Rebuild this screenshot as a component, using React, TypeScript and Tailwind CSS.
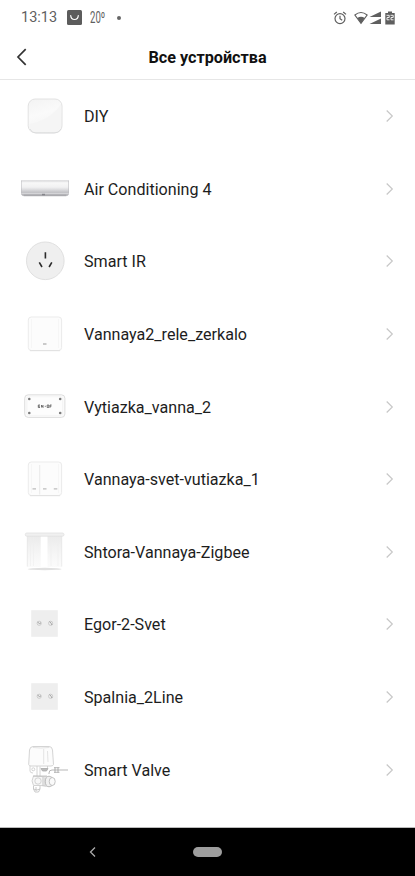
import type { ReactNode } from "react"

interface Device {
  name: string
  icon: ReactNode
}

function DiyIcon() {
  return (
    <>
      <defs>
        <linearGradient id="diy" x1="0" y1="0" x2="0.3" y2="1">
          <stop offset="0" stopColor="#f3f3f3" />
          <stop offset="0.5" stopColor="#fafafa" />
          <stop offset="1" stopColor="#f4f4f4" />
        </linearGradient>
      </defs>
      <rect x="7.2" y="7" width="33.8" height="33.8" rx="7" fill="url(#diy)" stroke="#e2e2e2" />
      <path d="M8.5 32C20 30 33 23 40 12V34Q40 40 34 40H14Q8.5 40 8.5 34Z" fill="#f5f5f5" />
      <path d="M9 37Q11 41 15 41H33Q38 41 40 37" fill="none" stroke="#d9dadc" strokeWidth="0.8" />
    </>
  )
}

function AirConditionerIcon() {
  return (
    <>
      <defs>
        <linearGradient id="ac" x1="0" y1="0" x2="0" y2="1">
          <stop offset="0" stopColor="#d4d4d6" />
          <stop offset="0.2" stopColor="#f8f8f8" />
          <stop offset="0.55" stopColor="#f1f1f2" />
          <stop offset="0.85" stopColor="#d0d0d3" />
          <stop offset="1" stopColor="#bdbdc0" />
        </linearGradient>
      </defs>
      <path d="M0.3 27H47.7V29.5Q47 31.3 45 31.3H3Q1 31.3 0.3 29.5Z" fill="#b9b9bd" />
      <rect x="0" y="15.3" width="48" height="12.5" rx="0.8" fill="url(#ac)" />
      <path d="M0.4 15.5V28M47.6 15.5V28" stroke="#bbbbbe" strokeWidth="0.6" />
      <path d="M1 28.3H47" stroke="#e4e4e6" strokeWidth="0.8" />
      <path d="M3 30.3H45" stroke="#9d9da2" strokeWidth="0.7" />
      <rect x="21" y="28.8" width="3" height="1.5" fill="#85858a" />
    </>
  )
}

function SocketIcon() {
  return (
    <>
      <circle cx="24.3" cy="23.8" r="18.8" fill="#efefef" stroke="#e0e0e0" />
      <path d="M24.4 15.3V21.5M18.3 25.3L21 30M30.8 25.3L28.1 30" stroke="#2b2b2b" strokeWidth="1.6" />
    </>
  )
}

function SwitchBody() {
  return (
    <>
      <rect x="7.3" y="7" width="33.3" height="33.5" rx="3" fill="#fcfcfc" stroke="#ebebeb" />
      <path d="M9 40.7H39" stroke="#dcdcdc" strokeWidth="0.8" />
      <path d="M10.5 9V38M37.5 9V38" stroke="#f6f6f6" />
    </>
  )
}

function SingleSwitchIcon() {
  return (
    <>
      <SwitchBody />
      <rect x="22" y="33.2" width="3.5" height="1.6" fill="#bdbdbd" />
    </>
  )
}

function TripleSwitchIcon() {
  return (
    <>
      <SwitchBody />
      <path d="M18.7 10V39.5" stroke="#e9e9e9" />
      <path d="M11.5 33.8H15M22 33.8H25.5M32.8 33.8H36.3" stroke="#bcbcbc" strokeWidth="1.2" />
    </>
  )
}

function RelayIcon() {
  return (
    <>
      <rect x="3.7" y="11.8" width="40.2" height="22.6" rx="3.5" fill="#fafafa" stroke="#dedede" />
      <rect x="6" y="13.8" width="35.5" height="18.5" rx="2" fill="#fdfdfd" stroke="#f0f0f0" strokeWidth="0.6" />
      <g fill="#7b7b7b">
        <circle cx="8.3" cy="16" r="1.3" />
        <circle cx="39.2" cy="16" r="1.3" />
        <circle cx="8.3" cy="30" r="1.3" />
        <circle cx="39.2" cy="30" r="1.3" />
      </g>
      <g fill="none" stroke="#666" strokeWidth="0.9">
        <path d="M19 22H17.3V24.5H19M17.3 23.2H19M20.5 22V24.5M22 22V24.5M20.5 22L22 24.5" />
        <path d="M23.8 23.3H24.8" />
        <path d="M26.2 22H27.8V24.5H26.2ZM30.6 22H29V24.8M29 23.2H30.4" />
      </g>
    </>
  )
}

function CurtainIcon() {
  return (
    <>
      <defs>
        <linearGradient id="curtain" x1="0" y1="0" x2="0" y2="1">
          <stop offset="0" stopColor="#ebebeb" />
          <stop offset="0.6" stopColor="#f6f6f6" />
          <stop offset="1" stopColor="#fbfbfb" />
        </linearGradient>
      </defs>
      <path d="M6 8H19.7V39H6ZM26.5 8H41V39H26.5Z" fill="url(#curtain)" />
      <path d="M9.5 9V38M12.5 9V38M30 9V38M37 9V38" stroke="#eeeeee" strokeWidth="0.6" />
      <path d="M6.3 8V38.5M40.7 8V38.5" stroke="#e6e6e6" strokeWidth="0.7" />
      <rect x="4.3" y="5" width="38.7" height="3.2" rx="1.5" fill="#f0f0f0" stroke="#dedede" strokeWidth="0.7" />
      <ellipse cx="23.7" cy="41" rx="17" ry="1.2" fill="#e0e0e0" />
    </>
  )
}

function DoubleButtonIcon() {
  return (
    <>
      <rect x="10.2" y="10.2" width="26.6" height="26.6" fill="#eee" />
      <g fill="none" strokeWidth="0.8">
        <circle cx="18.2" cy="23.3" r="2.1" stroke="#c4c4c4" />
        <circle cx="29.6" cy="23.3" r="2.1" stroke="#c4c4c4" />
        <path d="M16.6 22.2L18.6 23.6L20 22.8M28.6 21.6L30.2 23.4L31 25" stroke="#8f8f8f" />
      </g>
    </>
  )
}

function ValveIcon() {
  return (
    <g fill="none" stroke="#c9c9c9" strokeWidth="0.8">
      <path d="M7.7 18.5L8.5 4Q9 0.7 12 0.5H28.5Q31 0.7 31.5 4L32.5 18.5Q32 20 30 20H10Q8 20 7.700 18.5Z" fill="#fcfcfc" />
      <path d="M12 1.5Q19.500 2.5 28.5 1.5M22.7 3V18M26.5 5L27 16" stroke="#dcdcdc" />
      <path d="M9 20V25Q9 27 12 27M16 20V31M19 20.5V30M26.5 20V22" />
      <circle cx="12.3" cy="23.3" r="1.5" />
      <path d="M20 22.5H27L25.5 25H21.5Z" fill="#bbb" stroke="#a8a8a8" />
      <path d="M28 28V27Q28 24 31 24H47M34 21.5V26.5M37 21.5V26.5M33 21.7H38.5M33 26.3H38.5" stroke="#999" strokeWidth="0.7" />
      <path d="M12.5 30Q9.5 35 12.5 39.5H20Q25 41 31 40V31L20 30.5Z" fill="#f7f7f7" />
      <circle cx="17" cy="35" r="3.2" />
      <ellipse cx="28" cy="35.5" rx="3.8" ry="5.3" fill="#f1f1f1" stroke="#b4b4b4" />
      <ellipse cx="31.2" cy="35.5" rx="3" ry="4" fill="#fafafa" stroke="#b4b4b4" />
      <path d="M22 31V40M24 31.5V40M12 30H26" stroke="#b8b8b8" />
      <path d="M12.5 40V43Q16 45 19 43V40M12.5 43L14 46H17.5L19 43M15 41V45" stroke="#bdbdbd" />
    </g>
  )
}

const devices: Device[] = [
  { name: "DIY", icon: <DiyIcon /> },
  { name: "Air Conditioning 4", icon: <AirConditionerIcon /> },
  { name: "Smart IR", icon: <SocketIcon /> },
  { name: "Vannaya2_rele_zerkalo", icon: <SingleSwitchIcon /> },
  { name: "Vytiazka_vanna_2", icon: <RelayIcon /> },
  { name: "Vannaya-svet-vutiazka_1", icon: <TripleSwitchIcon /> },
  { name: "Shtora-Vannaya-Zigbee", icon: <CurtainIcon /> },
  { name: "Egor-2-Svet", icon: <DoubleButtonIcon /> },
  { name: "Spalnia_2Line", icon: <DoubleButtonIcon /> },
  { name: "Smart Valve", icon: <ValveIcon /> },
]

function StatusBar() {
  return (
    <div className="flex h-[35px] shrink-0 items-center pl-[21px] pr-5 text-[#5f5f5f]">
      <span className="w-[46px] pt-px text-[14.5px]">13:13</span>
      <svg className="h-[15px] w-[15px]" viewBox="0 0 15 15" fill="none">
        <rect width="15" height="15" rx="1.5" fill="#5c5c5c" />
        <path d="M3.7 5.5Q4 9.5 7.5 9.5T11.3 5.5" stroke="#fff" strokeWidth="1.2" strokeLinecap="round" />
      </svg>
      <span className="ml-2 w-[27px]">
        <span className="inline-block origin-left scale-x-[0.6] text-[16px]">20º</span>
      </span>
      <span className="h-1 w-1 rounded-full bg-[#666]" />

      <svg className="ml-auto h-[14px] w-[14px]" viewBox="0 0 14 14" fill="none" stroke="#5f5f5f" strokeWidth="1.2">
        <circle cx="7" cy="7.6" r="5" />
        <path d="M7 4.7V7.8L9.2 9.3M1 3.4L3.8 1M13 3.4L10.2 1" />
      </svg>
      <svg className="ml-[7px] h-[14px] w-[14px]" viewBox="0 0 14 14">
        <path d="M0.9 4Q7 -1 13.1 4L7 12.3Z" fill="none" stroke="#5f5f5f" strokeWidth="1.1" />
        <path d="M3.3 7Q7 4.5 10.7 7L7 12.5Z" fill="#5f5f5f" />
      </svg>
      <svg className="ml-px h-[14px] w-3" viewBox="0 0 12 14" fill="#5f5f5f">
        <path d="M0.5 6L12 0.5V6ZM0.5 13L12 7.5V13Z" />
      </svg>
      <svg className="ml-1 h-[14px] w-[10px]" viewBox="0 0 10 14">
        <path d="M3 0.5H7V2H9.7V13.5H0.3V2H3Z" fill="#5f5f5f" />
        <path d="M1.500 4.3H4.2V6.5H2V8.8H4.5M5.5 4.3H8.2V6.5H6V8.8H8.5" fill="none" stroke="#eee" strokeWidth="1" />
      </svg>
    </div>
  )
}

function Header() {
  return (
    <header className="relative flex h-[45px] shrink-0 items-center justify-center border-b border-[#e6e6e6]">
      <button className="absolute left-4 top-[13px]" aria-label="Назад">
        <svg className="h-[18px] w-3" viewBox="0 0 12 18" fill="none" stroke="#333" strokeWidth="1.7">
          <path d="M9.7 1.2L2 9L9.7 16.8" />
        </svg>
      </button>
      <h1 className="pt-0.5 text-[16.2px] font-bold leading-5 text-[#111]">Все устройства</h1>
    </header>
  )
}

function DeviceRow({ device }: { device: Device }) {
  return (
    <li className="flex h-[72.6px] items-center pl-[21px] pr-[21px]">
      <svg className="h-12 w-12 shrink-0" viewBox="0 0 48 48">
        {device.icon}
      </svg>
      <span className="ml-[15px] flex-1 pt-0.5 text-[16.1px] leading-5 text-[#1d1d1d]">{device.name}</span>
      <svg className="h-3 w-2" viewBox="0 0 8 12" fill="none" stroke="#c8c8c8" strokeWidth="1.2">
        <path d="M0.7 0.5L6.3 6L0.7 11.5" />
      </svg>
    </li>
  )
}

export default function App() {
  return (
    <div className="flex h-[876px] w-[415px] flex-col overflow-hidden bg-white font-['Roboto',sans-serif]">
      <StatusBar />
      <Header />
      <ul className="flex-1">
        {devices.map((device) => (
          <DeviceRow key={device.name} device={device} />
        ))}
      </ul>
      <nav className="flex h-[49px] shrink-0 items-center border-t border-[#bbb] bg-black">
        <svg className="ml-[89px] h-[10px] w-[7px]" viewBox="0 0 7 10" fill="none" stroke="#aaa" strokeWidth="1.3">
          <path d="M6 0.5L1.500 5L6 9.5" />
        </svg>
        <span className="ml-[97px] h-[10px] w-[29px] rounded-full bg-[#9e9e9e]" />
      </nav>
    </div>
  )
}
